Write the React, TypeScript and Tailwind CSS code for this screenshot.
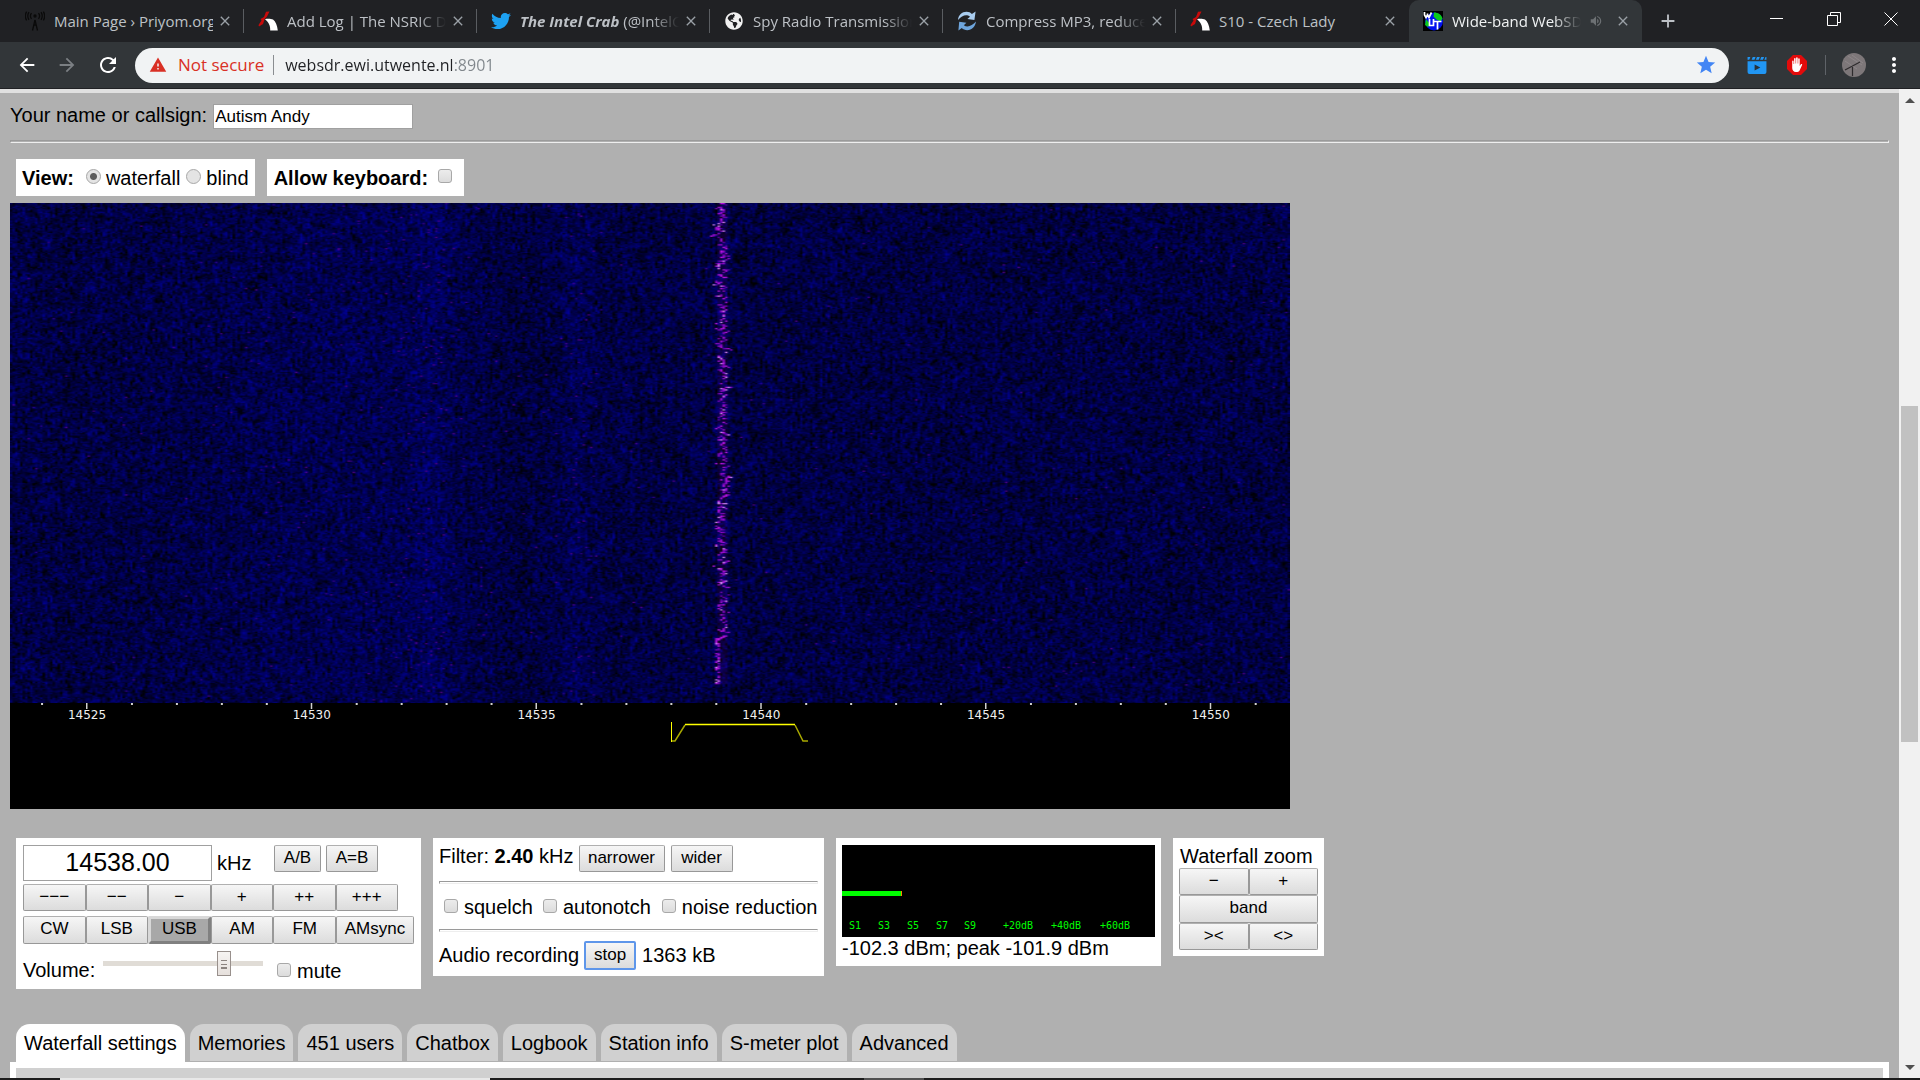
import { useEffect, useRef, useState } from "react";
import type { ReactNode } from "react";
import { FaTwitter, FaGlobeAmericas } from "react-icons/fa";
import {
  MdArrowBack,
  MdArrowForward,
  MdRefresh,
  MdWarning,
  MdStar,
  MdVolumeUp,
  MdMoreVert,
  MdClose,
  MdAdd,
} from "react-icons/md";

const AntennaIcon = () => (
  <svg viewBox="0 0 20 20" className="h-5 w-5 shrink-0" fill="none" stroke="#0a0a0a" strokeWidth="1.3">
    <circle cx="10" cy="5" r="1" fill="#0a0a0a" />
    <path d="M6.500 2.200a4.500 4.500 0 0 0 0 5.600M13.500 2.200a4.500 4.500 0 0 1 0 5.600M4 1.200a7 7 0 0 0 0 7.600M16 1.200a7 7 0 0 1 0 7.600M1.600.6a9 9 0 0 0 0 8.800M18.400.6a9 9 0 0 1 0 8.800" />
    <path d="M10 9 7.500 19.500M10 9l2.500 10.500M9 14h2" />
  </svg>
);

const NsricIcon = () => (
  <svg viewBox="0 0 20 20" className="h-5 w-5 shrink-0">
    <path d="M8 .8 11.500.5 9 5.500 6.500 8.500 5 13 1 15.500l-.5-1.500 3-4.500-1-1.500 3.500-2z" fill="#c80a0a" />
    <path d="M7 8.200c2-.8 6-.6 8 .2 2.600 2 4.200 5.600 4.800 11h-7.600c.2-4.400-1.200-8-5.200-11.200z" fill="#fff" />
  </svg>
);

const ConvertIcon = () => (
  <svg viewBox="0 0 20 20" className="h-5 w-5 shrink-0">
    <path d="M1 9C1.4 4 5 .8 9.5.8c2.4 0 4 .8 5.4 2.2L18.6.6 17.4 9l-7-1 2.6-2.200C9.600 3 5 4.400 1 9z" fill="#a9cdf0" />
    <path d="M19 10.600c-.6 5.200-4.200 8.600-8.800 8.600-2.200 0-4-.8-5.400-2.200L1.400 19.400l.8-8.600 7.200 1-2.600 2.400c3.600 2.600 8.200.8 12.200-3.600z" fill="#6ea5dc" />
  </svg>
);

const WebSdrIcon = () => (
  <svg viewBox="0 0 20 20" className="h-5 w-5 shrink-0">
    <rect width="20" height="20" fill="#000" />
    <circle cx="11" cy="10.500" r="9" fill="#0011ee" />
    <path d="M11 1.500c4 0 7.500 2 8.500 6l-2 3-4-2-3-3zM3 8l4 5-2 3-3-2z" fill="#0bc91b" />
    <path
      d="M1.500 1v3L3 6.500 4.500 4V2.500M4.500 4 6 6.500 8.500 1.500M6.500 8v6.500h4V8M10.500 10.500h8M14.500 11v7.500"
      fill="none"
      stroke="#fff"
      strokeWidth="1.700"
    />
  </svg>
);

const VideoIcon = () => (
  <svg viewBox="0 0 20 18" className="h-[17px] w-5">
    <path
      d="M0 0h3L1.800 2.800H0zM5.500 0h3L7.300 2.800h-3zM10 0h3l-1.200 2.800h-3zM14.500 0h3l-1.200 2.800h-3zM19 0h1v2.800h-2.200zM0 4.500h20V16a2 2 0 0 1-2 2H2a2 2 0 0 1-2-2z"
      fill="#2196f3"
    />
    <path d="m7.500 8 6 3-6 3.200z" fill="#27323a" />
  </svg>
);

const BlockIcon = () => (
  <svg viewBox="0 0 20 20" className="h-5 w-5">
    <path d="M6 0h8l6 6v8l-6 6H6l-6-6V6z" fill="#e30b0b" />
    <path
      d="M5.200 10.500V6.200c0-1 1.400-1 1.400 0V9h.5V3.800c0-1 1.500-1 1.500 0V8.500h.5V3c0-1 1.600-1 1.600 0v5.500h.5V3.900c0-1 1.500-1 1.500 0v7.200l1-1.600c.7-.9 1.800-.4 1.400.6l-2.400 5.200c-.5 1-1.200 1.700-2.400 1.700H8.800c-2.200 0-3.600-1.700-3.600-4z"
      fill="#fff"
    />
  </svg>
);

const AvatarIcon = () => (
  <svg viewBox="0 0 24 24" className="h-6 w-6">
    <circle cx="12" cy="12" r="12" fill="#7d7779" />
    <path d="M6 3l14 9M10 2l11 8M3 8l12 8" stroke="#938d8f" strokeWidth="0.700" fill="none" />
    <path d="M3 17 18 9M10.500 23v-9" stroke="#2e2b2d" strokeWidth="1.200" fill="none" />
  </svg>
);

type Tab = { icon: ReactNode; title: ReactNode; playing?: boolean; fits?: boolean };

const browserTabs: Tab[] = [
  { icon: <AntennaIcon />, title: "Main Page › Priyom.org", fits: true },
  { icon: <NsricIcon />, title: "Add Log | The NSRIC Database" },
  {
    icon: <FaTwitter size={20} color="#1da1f2" className="shrink-0" />,
    title: (
      <>
        <b>
          <i>The Intel Crab</i>
        </b>{" "}
        (@IntelCrab)
      </>
    ),
  },
  { icon: <FaGlobeAmericas size={18} color="#f1f1f1" className="mx-px shrink-0" />, title: "Spy Radio Transmissions" },
  { icon: <ConvertIcon />, title: "Compress MP3, reduce size" },
  { icon: <NsricIcon />, title: "S10 - Czech Lady", fits: true },
  { icon: <WebSdrIcon />, title: "Wide-band WebSDR", playing: true },
];

const BrowserTab = ({ tab, active, divider }: { tab: Tab; active: boolean; divider: boolean }) => (
  <div
    className={
      "flex h-full w-[233px] min-w-0 items-center pl-[14px] pr-[11px] " +
      (active ? "rounded-t-[10px] bg-[#323639] text-[#f1f3f4]" : "text-[#bdc1c6]")
    }
  >
    {tab.icon}
    <span
      className={
        "ml-[9px] min-w-0 flex-1 overflow-hidden whitespace-nowrap text-[15px] " +
        (tab.fits ? "" : "[mask-image:linear-gradient(to_right,black_calc(100%-28px),transparent)]")
      }
    >
      {tab.title}
    </span>
    {tab.playing && <MdVolumeUp size={14} color="#6d7174" className="ml-2 mr-2" />}
    <button aria-label="Close tab" className="ml-1 shrink-0 text-[#9aa0a6]">
      <MdClose size={16} />
    </button>
    {divider && <span className="-mr-[11px] ml-[10px] h-6 w-px bg-[#5a5d61]" />}
  </div>
);

const TitleBar = () => (
  <div className="flex h-[42px] shrink-0 bg-[#202124] pl-[11px]">
    {browserTabs.map((tab, i) => (
      <BrowserTab key={i} tab={tab} active={i === 6} divider={i < 5} />
    ))}
    <button aria-label="New tab" className="ml-[15px] text-[#bdc1c6]">
      <MdAdd size={22} />
    </button>
    <div className="ml-auto flex h-[37px] items-center text-white">
      <button aria-label="Minimize" className="flex w-[57px] justify-center">
        <span className="h-px w-[13px] bg-white" />
      </button>
      <button aria-label="Restore" className="flex w-[57px] justify-center">
        <svg viewBox="0 0 14 14" className="h-[14px] w-[14px]" fill="none" stroke="#fff">
          <path d="M.5 3.500h10v10H.5zM3.500 3.500v-3h10v10h-3" />
        </svg>
      </button>
      <button aria-label="Close" className="flex w-[58px] justify-center">
        <svg viewBox="0 0 14 14" className="h-[14px] w-[14px]" stroke="#fff">
          <path d="M.5.5l13 13M13.500.5l-13 13" />
        </svg>
      </button>
    </div>
  </div>
);

const Toolbar = () => (
  <div className="flex h-[47px] shrink-0 items-center border-b border-[#202124] bg-[#323639] pl-4 text-white">
    <button aria-label="Back" className="mr-[18px]">
      <MdArrowBack size={22} />
    </button>
    <button aria-label="Forward" className="mr-[18px] text-[#7b7f83]">
      <MdArrowForward size={22} />
    </button>
    <button aria-label="Reload" className="mr-[15px]">
      <MdRefresh size={24} />
    </button>
    <div className="flex h-[35px] flex-1 items-center rounded-full bg-[#f1f3f4] pl-[14px] pr-[12px] text-[17px]">
      <MdWarning size={18} color="#d93025" />
      <span className="ml-[11px] text-[#d93025]">Not secure</span>
      <span className="ml-[9px] mr-[11px] h-5 w-px bg-[#8a8d91]" />
      <input
        aria-label="Address"
        defaultValue="websdr.ewi.utwente.nl:8901"
        className="min-w-0 flex-1 bg-[linear-gradient(to_right,#202124_167px,#80868b_167px)] bg-clip-text text-base text-transparent outline-none"
      />
      <button aria-label="Bookmark" className="text-[#4285f4]">
        <MdStar size={22} />
      </button>
    </div>
    <button aria-label="Video downloader" className="ml-[18px]">
      <VideoIcon />
    </button>
    <button aria-label="Blocker" className="ml-5">
      <BlockIcon />
    </button>
    <span className="ml-[18px] h-5 w-px bg-[#5f6368]" />
    <button aria-label="Profile" className="ml-4">
      <AvatarIcon />
    </button>
    <button aria-label="Menu" className="ml-4 mr-[14px]">
      <MdMoreVert size={24} />
    </button>
  </div>
);

// small seeded generator so the noise stays the same on every render
function createRandom(seed: number) {
  return () => {
    seed = (seed + 0x6d2b79f5) | 0;
    let t = Math.imul(seed ^ (seed >>> 15), 1 | seed);
    t = (t + Math.imul(t ^ (t >>> 7), 61 | t)) ^ t;
    return ((t ^ (t >>> 14)) >>> 0) / 4294967296;
  };
}

const COLS = 512;
const ROWS = 400;

function bump(x: number, center: number, width: number) {
  return Math.exp(-(((x - center) / width) ** 2));
}

function drawWaterfall(ctx: CanvasRenderingContext2D) {
  const random = createRandom(14538);
  const image = ctx.createImageData(COLS, ROWS);
  const previous = new Float32Array(COLS).fill(0.5);
  let drift = 0;

  for (let y = 0; y < ROWS; y++) {
    drift = drift * 0.6 + (random() - 0.5) * 3.2;

    for (let x = 0; x < COLS; x++) {
      const wide = bump(x, 140, 60);
      const narrow = bump(x, 168, 8) + bump(x, 226, 6);
      const noise = (random() + random()) / 2;
      previous[x] = previous[x] * 0.45 + noise * 0.55;

      const level = (previous[x] - 0.5) * 230 + 66 + wide * 12 + narrow * 15 - bump(x, 200, 14) * 8;
      let r = 0;
      let g = 0;
      let b = Math.max(0, Math.min(150, level));

      if (random() < 0.0012 + wide * 0.003 + narrow * 0.013) {
        r = 35 + random() * 45;
        b = 120 + random() * 30;
      }

      if (y < 385) {
        const settled = y > 348;
        const center = settled ? 282.5 : 284.5 + drift;
        const distance = Math.abs(x - center);
        const chance = settled ? (distance < 1 ? 0.55 : 0) : distance < 0.8 ? 0.6 : distance < 1.8 ? 0.18 : 0;
        if (random() < chance) {
          const power = random();
          r = 80 + power * 130;
          g = power > 0.9 ? 130 : power * 25;
          b = 160 + power * 80;
        } else if (Math.abs(x - 284.5) < 2.5) {
          b += 10;
          r = 12;
        }
      }

      image.data.set([r, g, b, 255], (y * COLS + x) * 4);
    }
  }

  ctx.putImageData(image, 0, 0);
}

const Waterfall = () => {
  const canvasRef = useRef<HTMLCanvasElement>(null);

  useEffect(() => {
    const ctx = canvasRef.current?.getContext("2d");

    if (!ctx) return;

    drawWaterfall(ctx);
  }, []);

  const ticks = Array.from({ length: 28 }, (_, i) => 14524 + i);

  return (
    <div className="mt-[7px] w-full max-w-[1280px] bg-black">
      <canvas ref={canvasRef} width={COLS} height={ROWS} className="block h-[500px] w-full" />
      <svg viewBox="0 0 1280 106" className="block w-full" fontFamily="DejaVu Sans, sans-serif" fontSize="12">
        {ticks.map((khz) => {
          const x = 77 + (khz - 14525) * 44.95;
          const major = khz % 5 === 0;
          return (
            <g key={khz}>
              <rect x={x - 1} y="0" width={major ? 1.5 : 2} height={major ? 6 : 2} fill="#d0d0d0" />
              {major && (
                <text x={x} y="16" fill="#f0f0f0" textAnchor="middle">
                  {khz}
                </text>
              )}
            </g>
          );
        })}
        <path d="M661 38h4l10-16M785 22l8 16h5" fill="none" stroke="#a8a800" strokeWidth="1.500" />
        <path d="M661.500 19v20" fill="none" stroke="#ffff00" />
        <path d="M675 21.500h110" fill="none" stroke="#ffff00" strokeWidth="1.500" />
      </svg>
    </div>
  );
};

const tones = {
  normal: "border border-[#989898] border-t-[#b0b0b0] bg-linear-to-b from-[#f6f6f6] to-[#dcdcdc]",
  pressed: "border-[3px] border-[#d8d8d8] border-b-[#808080] border-r-[#808080] bg-[#a8a8a8]",
  focused: "border-2 border-[#5e96ea] bg-linear-to-b from-[#f6f6f6] to-[#dcdcdc]",
};

type ButtonProps = {
  children: ReactNode;
  tone?: keyof typeof tones;
  className?: string;
};

const Button = ({ children, tone = "normal", className = "h-[27px]" }: ButtonProps) => (
  <button className={"rounded-[2px] pb-[2px] text-[17px] leading-5 " + tones[tone] + " " + className}>{children}</button>
);

const Check = ({ label, className = "" }: { label: string; className?: string }) => (
  <label className={"flex items-center " + className}>
    <input
      type="checkbox"
      className="mb-[3px] mr-[6px] h-[14px] w-[14px] appearance-none rounded-[3px] border border-[#a8a8a8] bg-linear-to-b from-[#ececec] to-[#dcdcdc] checked:bg-[#666]"
    />
    {label}
  </label>
);

const Rule = ({ className }: { className: string }) => (
  <hr className={"h-[3px] border border-[#9a9a9a] border-b-[#eeeeee] border-r-[#eeeeee] " + className} />
);

const Radio = ({ label, checked, onChange }: { label: string; checked: boolean; onChange: () => void }) => (
  <label className="flex items-center">
    <input
      type="radio"
      name="view"
      checked={checked}
      onChange={onChange}
      className="mb-[2px] mr-[5px] h-[15px] w-[15px] appearance-none rounded-full border border-[#a8a8a8] bg-[#e4e4e4] checked:bg-[radial-gradient(circle,#5c5c5c_3px,#e4e4e4_4px)]"
    />
    {label}
  </label>
);

const ViewOptions = () => {
  const [view, setView] = useState("waterfall");

  return (
    <div className="ml-[6px] mt-4 flex gap-3">
      <fieldset className="flex h-[37px] items-center bg-white px-[6px]">
        <b className="mr-3">View:</b>
        <Radio label="waterfall" checked={view === "waterfall"} onChange={() => setView("waterfall")} />
        <span className="w-[6px]" />
        <Radio label="blind" checked={view === "blind"} onChange={() => setView("blind")} />
      </fieldset>
      <label className="flex h-[37px] items-center bg-white px-[7px] font-bold">
        Allow keyboard:
        <input
          type="checkbox"
          className="mb-[3px] ml-[10px] mr-[5px] h-[14px] w-[14px] appearance-none rounded-[3px] border border-[#a8a8a8] bg-linear-to-b from-[#ececec] to-[#dcdcdc] checked:bg-[#666]"
        />
      </label>
    </div>
  );
};

const modes = ["CW", "LSB", "USB", "AM", "FM"];
const steps = ["−−−", "−−", "−", "+", "++", "+++"];

const TuningPanel = () => (
  <section className="h-[151px] w-[405px] bg-white px-[7px] pt-[7px]">
    <div className="flex">
      <input
        aria-label="Frequency"
        defaultValue="14538.00"
        className="h-9 w-[189px] border border-[#a0a0a0] pb-[2px] text-center text-[25px] outline-none"
      />
      <span className="ml-[5px] mt-[7px] w-[57px]">kHz</span>
      <Button className="h-[27px] w-[47px]">A/B</Button>
      <Button className="ml-[5px] h-[27px] w-[52px]">A=B</Button>
    </div>
    <div className="mt-[3px] grid w-[375px] grid-cols-6">
      {steps.map((step) => (
        <Button key={step}>{step}</Button>
      ))}
    </div>
    <div className="mt-[5px] flex">
      <div className="grid w-[313px] grid-cols-5">
        {modes.map((mode) => (
          <Button key={mode} tone={mode === "USB" ? "pressed" : "normal"} className="h-7">
            {mode}
          </Button>
        ))}
      </div>
      <Button className="h-7 w-[78px]">AMsync</Button>
    </div>
    <div className="mt-[6px] flex">
      <label htmlFor="volume" className="mt-[9px] w-20">
        Volume:
      </label>
      <input
        id="volume"
        type="range"
        defaultValue="78"
        className="h-[27px] w-40 appearance-none bg-[linear-gradient(#e0dcd6,#e0dcd6)] bg-[length:100%_5px] bg-center bg-no-repeat [&::-webkit-slider-thumb]:h-[25px] [&::-webkit-slider-thumb]:w-[14px] [&::-webkit-slider-thumb]:appearance-none [&::-webkit-slider-thumb]:border [&::-webkit-slider-thumb]:border-[#98908c] [&::-webkit-slider-thumb]:bg-[linear-gradient(#8c8480,#8c8480),linear-gradient(#8c8480,#8c8480),linear-gradient(#8c8480,#8c8480),linear-gradient(#f6f4f2,#e6e0dc)] [&::-webkit-slider-thumb]:bg-[length:6px_1px,6px_1px,6px_2px,100%_100%] [&::-webkit-slider-thumb]:bg-[position:3px_8px,3px_12px,3px_15px,0_0] [&::-webkit-slider-thumb]:bg-no-repeat"
      />
      <Check label="mute" className="ml-[14px] mt-[9px] h-6" />
    </div>
  </section>
);

const FilterPanel = () => (
  <section className="h-[138px] w-[391px] bg-white px-[6px] pt-[7px]">
    <div className="flex h-[27px]">
      <span className="mr-[5px]">
        Filter: <b>2.40</b> kHz
      </span>
      <Button className="h-[27px] w-[86px]">narrower</Button>
      <Button className="ml-[6px] h-[27px] w-[62px]">wider</Button>
    </div>
    <Rule className="mt-[9px]" />
    <div className="mt-[11px] flex h-[24px] whitespace-nowrap pl-[5px]">
      <Check label="squelch" />
      <Check label="autonotch" className="ml-[10px]" />
      <Check label="noise reduction" className="ml-[11px]" />
    </div>
    <Rule className="mt-[10px]" />
    <div className="mt-[9px] flex h-[29px] items-start">
      <span className="mr-[5px] mt-[3px]">Audio recording</span>
      <Button tone="focused" className="h-[29px] w-[52px]">
        stop
      </Button>
      <span className="ml-[6px] mt-[3px]">1363 kB</span>
    </div>
  </section>
);

const meterLabels = [
  { x: 7, text: "S1" },
  { x: 36, text: "S3" },
  { x: 65, text: "S5" },
  { x: 94, text: "S7" },
  { x: 122, text: "S9" },
  { x: 161, text: "+20dB" },
  { x: 209, text: "+40dB" },
  { x: 258, text: "+60dB" },
];

const MeterPanel = () => (
  <section className="h-[128px] w-[325px] bg-white px-[6px] pt-[7px]">
    <svg viewBox="0 0 313 92" className="block w-full bg-black">
      <rect y="46" width="60" height="5" fill="#00ff00" />
      <rect x="59" y="46" width="1" height="5" fill="#ff8000" />
      {meterLabels.map((label) => (
        <text key={label.text} x={label.x} y="84" fill="#00ff00" fontSize="10" fontFamily="DejaVu Sans Mono, monospace">
          {label.text}
        </text>
      ))}
    </svg>
    <p>-102.3 dBm; peak -101.9 dBm</p>
  </section>
);

const ZoomPanel = () => (
  <section className="h-[118px] w-[151px] bg-white px-[6px] pt-[7px]">
    <p className="h-[23px] pl-px">Waterfall zoom</p>
    <div className="grid grid-cols-2">
      <Button>−</Button>
      <Button>+</Button>
      <Button className="col-span-2 h-[28px]">band</Button>
      <Button>{"><"}</Button>
      <Button>{"<>"}</Button>
    </div>
  </section>
);

const pageTabs = [
  "Waterfall settings",
  "Memories",
  "451 users",
  "Chatbox",
  "Logbook",
  "Station info",
  "S-meter plot",
  "Advanced",
];

const PageTabs = () => {
  const [current, setCurrent] = useState(pageTabs[0]);

  return (
    <div className="mt-[35px] flex flex-1 flex-col">
      <div className="ml-[6px] flex gap-[5px]">
        {pageTabs.map((name) => (
          <button
            key={name}
            onClick={() => setCurrent(name)}
            className={
              "h-[38px] rounded-t-[14px] px-2 " +
              (name === current ? "bg-white" : "border-b border-[#b0b0b0] bg-[#d0d0d0]")
            }
          >
            {name}
          </button>
        ))}
      </div>
      <div className="flex-1 border-x-[6px] border-t-[6px] border-white bg-[#d0d0d0]" />
    </div>
  );
};

const Scrollbar = () => (
  <div className="flex w-[21px] shrink-0 flex-col items-center bg-[#f1f1f1]">
    <span className="mt-[9px] border-x-[5px] border-b-[5px] border-x-transparent border-b-[#505050]" />
    <span className="flex-[303]" />
    <span className="w-[17px] flex-[336] bg-[#c1c1c1]" />
    <span className="flex-[323]" />
    <span className="mb-[8px] border-x-[5px] border-t-[5px] border-x-transparent border-t-[#505050]" />
  </div>
);

export default function App() {
  return (
    <div className="flex h-screen flex-col overflow-hidden font-['Open_Sans','Noto_Sans',sans-serif]">
      <TitleBar />
      <Toolbar />
      <div className="flex min-h-0 flex-1 bg-[#b0b0b0] font-['Liberation_Sans',Arial,sans-serif] text-[20px] leading-[22px] text-black">
        <main className="flex min-w-0 flex-1 flex-col overflow-hidden border-t-4 border-[#e0e0e0]">
          <div className="flex flex-1 flex-col px-[10px] pt-[11px]">
            <div className="flex">
              <label htmlFor="callsign" className="mr-[6px]">
                Your name or callsign:
              </label>
              <input
                id="callsign"
                defaultValue="Autism Andy"
                className="h-[25px] w-[200px] border border-[#a0a0a0] bg-white px-px text-[17px] outline-none"
              />
            </div>
            <Rule className="mt-[11px]" />
            <ViewOptions />
            <Waterfall />
            <div className="ml-[6px] mt-[29px] flex h-[151px] items-start gap-3">
              <TuningPanel />
              <FilterPanel />
              <MeterPanel />
              <ZoomPanel />
            </div>
            <PageTabs />
          </div>
        </main>
        <Scrollbar />
      </div>
      <div className="flex h-[2px] shrink-0 bg-[#1c1c1c]">
        <span className="ml-[60px] w-[430px] bg-[#e8e8e8]" />
        <span className="ml-[374px] w-[60px] bg-[#505050]" />
      </div>
    </div>
  );
}
